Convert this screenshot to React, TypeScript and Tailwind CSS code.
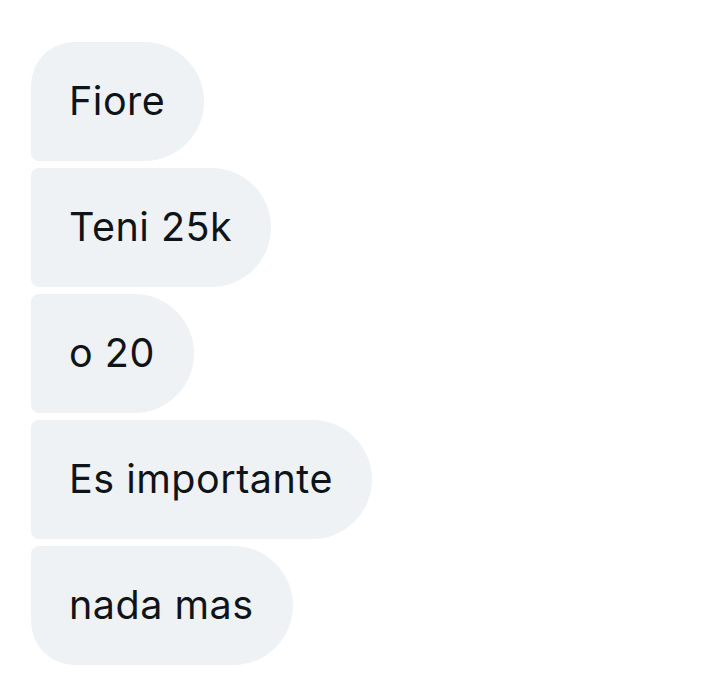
import React from 'react';

const messages = ['Fiore', 'Teni 25k', 'o 20', 'Es importante', 'nada mas'];

const Bubble = ({ text, first, last }: { text: string; first: boolean; last: boolean }) => {
  return (
    <div
      className={`flex h-[119px] items-center bg-[#eef2f5] pl-[38px] pr-[39px] rounded-r-[60px] ${
        first ? 'rounded-tl-[44px]' : 'rounded-tl-[8px]'
      } ${last ? 'rounded-bl-[44px]' : 'rounded-bl-[8px]'}`}
    >
      <span className="text-[39.5px] leading-none text-[#0f1419] tracking-[0.5px]">{text}</span>
    </div>
  );
};

export default function App() {
  return (
    <div
      className="w-[722px] h-[690px] bg-white pt-[42px] pl-[31px]"
      style={{ fontFamily: 'Inter, "Liberation Sans", sans-serif' }}
    >
      <div className="flex flex-col items-start gap-[7px]">
        {messages.map((m, i) => (
          <Bubble key={i} text={m} first={i === 0} last={i === messages.length - 1} />
        ))}
      </div>
    </div>
  );
}
